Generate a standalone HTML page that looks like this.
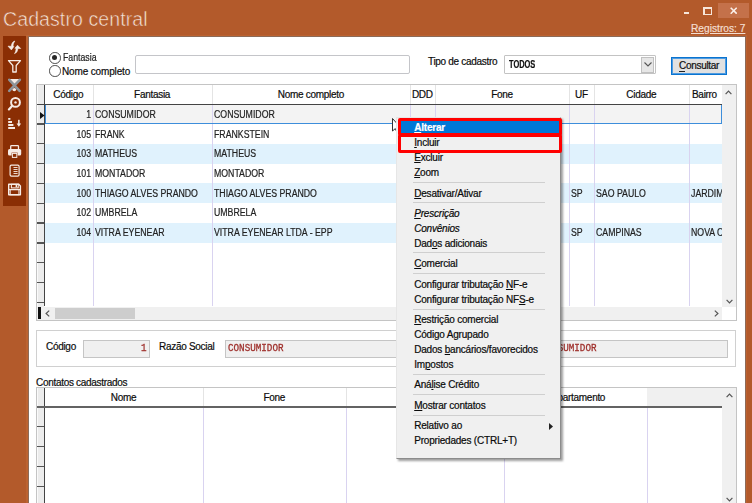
<!DOCTYPE html><html><head><meta charset="utf-8"><style>
*{margin:0;padding:0;box-sizing:border-box}
html,body{width:752px;height:503px;overflow:hidden;background:#B35A2B;font-family:"Liberation Sans",sans-serif;font-size:10px;color:#0d0d0d}
div,span{position:absolute;white-space:nowrap}
.t{line-height:12px;-webkit-text-stroke:0.2px currentColor}
.up{transform:scaleX(.875);transform-origin:0 0;color:#222}
.upr{transform:scaleX(.875);transform-origin:100% 0;color:#222}
.lc{letter-spacing:-0.3px}
.vl{width:1px;background:#D9D3F0}
.ind{left:37px;width:7px;background:#ECECEC;border-left:1px solid #FAFAFA}
.sep{left:15px;width:132px;height:1px;background:#CFCFCF}
.mi{left:17.2px;line-height:12px;-webkit-text-stroke:0.2px currentColor;letter-spacing:-0.2px;color:#0a0a0a}
.u{text-decoration:underline}
u{text-underline-offset:1px}
</style></head><body>
<div class="t" style="left:3px;top:7px;font-size:19.5px;line-height:24px;color:#F6E6DC;letter-spacing:0.1px;-webkit-text-stroke:0.5px #B35A2B">Cadastro central</div>
<div style="left:718px;top:2.5px;width:31px;height:15.5px;background:#C4714A"></div>
<div style="left:683.8px;top:12.3px;width:5.6px;height:2px;background:#F7E6DA"></div>
<div style="left:702.6px;top:7.2px;width:9.2px;height:7.4px;border:2px solid #F7E6DA;border-width:2px 1.8px 1.8px 2px"></div>
<svg style="position:absolute;left:729.5px;top:6.8px" width="7.4" height="7.4" viewBox="0 0 7.4 7.4"><path d="M0.7 0.7L6.7 6.7M6.7 0.7L0.7 6.7" stroke="#FAEFE8" stroke-width="1.6"/></svg>
<div class="t" style="left:691px;top:23px;color:#F3DED1;text-decoration:underline;font-size:10.2px">Registros: 7</div>
<div style="left:26px;top:35px;width:721px;height:468px;background:#BC6230"></div>
<div style="left:3px;top:36px;width:23px;height:170px;background:#8A2E04"></div>
<div style="left:28px;top:36px;width:718px;height:467px;background:#FFFFFF;border:1px solid #8C6A58;border-bottom:none"></div>
<div style="left:49px;top:52px;width:11.5px;height:11.5px;border-radius:50%;border:1px solid #4A4A4A;background:#fff"></div>
<div style="left:52.2px;top:55.2px;width:5.1px;height:5.1px;border-radius:50%;background:#262626"></div>
<div style="left:49px;top:65px;width:11.5px;height:11.5px;border-radius:50%;border:1px solid #4A4A4A;background:#fff"></div>
<div class="t up" style="left:62.5px;top:52px">Fantasia</div>
<div class="t" style="left:62px;top:66px;letter-spacing:-0.15px">Nome completo</div>
<div style="left:135px;top:55px;width:275px;height:19px;border:1px solid #C4C5C9;border-radius:2px;background:#fff"></div>
<div class="t lc" style="left:428px;top:56.2px">Tipo de cadastro</div>
<div style="left:504px;top:55px;width:152px;height:19px;border:1px solid #C3C3C3;border-radius:1px;background:#fff"></div>
<div class="t" style="left:508.8px;top:58.6px;font-weight:bold;font-size:10.2px;transform:scaleX(.73);transform-origin:0 0">TODOS</div>
<div style="left:641px;top:57px;width:13px;height:16px;background:#E6E6E6;border:1px solid #C0C0C0"></div>
<svg style="position:absolute;left:644px;top:62px" width="8" height="5" viewBox="0 0 8 5"><path d="M0.5 0.5L4 4L7.5 0.5" fill="none" stroke="#555" stroke-width="1.1"/></svg>
<div style="left:671px;top:57px;width:56px;height:18px;border:1px solid #0A74D0;background:#E1E1E1;box-shadow:inset 0 0 0 1px #4F9BE0"></div>
<div class="t lc" style="left:679px;top:60px">Consultar</div>
<div style="left:679px;top:71px;width:6px;height:1px;background:#222"></div>
<div style="left:36px;top:84px;width:701px;height:237px;border:1px solid #C4C4C4;background:#fff"></div>
<div style="left:45px;top:104.60px;width:677px;height:19.72px;background:#F3F3F3"></div>
<div style="left:45px;top:124.32px;width:677px;height:19.72px;background:#FFFFFF"></div>
<div style="left:45px;top:144.04px;width:677px;height:19.72px;background:#E0F2FD"></div>
<div style="left:45px;top:163.76px;width:677px;height:19.72px;background:#FFFFFF"></div>
<div style="left:45px;top:183.48px;width:677px;height:19.72px;background:#E0F2FD"></div>
<div style="left:45px;top:203.20px;width:677px;height:19.72px;background:#FFFFFF"></div>
<div style="left:45px;top:222.92px;width:677px;height:19.72px;background:#E0F2FD"></div>
<div class="ind" style="top:85px;height:222px"></div>
<div style="left:37px;top:103.50px;width:8px;height:1.3px;background:#555"></div>
<div style="left:37px;top:123.33px;width:8px;height:1.3px;background:#555"></div>
<div style="left:37px;top:143.16px;width:8px;height:1.3px;background:#555"></div>
<div style="left:37px;top:162.99px;width:8px;height:1.3px;background:#555"></div>
<div style="left:37px;top:182.82px;width:8px;height:1.3px;background:#555"></div>
<div style="left:37px;top:202.65px;width:8px;height:1.3px;background:#555"></div>
<div style="left:37px;top:222.48px;width:8px;height:1.3px;background:#555"></div>
<div style="left:37px;top:242.31px;width:8px;height:1.3px;background:#555"></div>
<div style="left:37px;top:262.14px;width:8px;height:1.3px;background:#555"></div>
<div style="left:37px;top:281.97px;width:8px;height:1.3px;background:#555"></div>
<div style="left:37px;top:301.80px;width:8px;height:1.3px;background:#555"></div>
<div style="left:44px;top:85px;width:1.3px;height:221px;background:#444"></div>
<div style="left:92.5px;top:85px;width:1px;height:19px;background:#E4E4E4"></div>
<div style="left:211.7px;top:85px;width:1px;height:19px;background:#E4E4E4"></div>
<div style="left:410px;top:85px;width:1px;height:19px;background:#E4E4E4"></div>
<div style="left:434.6px;top:85px;width:1px;height:19px;background:#E4E4E4"></div>
<div style="left:569.3px;top:85px;width:1px;height:19px;background:#E4E4E4"></div>
<div style="left:593.5px;top:85px;width:1px;height:19px;background:#E4E4E4"></div>
<div style="left:689px;top:85px;width:1px;height:19px;background:#E4E4E4"></div>
<div class="vl" style="left:92.5px;top:105px;height:201px"></div>
<div class="vl" style="left:211.7px;top:105px;height:201px"></div>
<div class="vl" style="left:410px;top:105px;height:201px"></div>
<div class="vl" style="left:434.6px;top:105px;height:201px"></div>
<div class="vl" style="left:569.3px;top:105px;height:201px"></div>
<div class="vl" style="left:593.5px;top:105px;height:201px"></div>
<div class="vl" style="left:689px;top:105px;height:201px"></div>
<div style="left:37px;top:104px;width:685px;height:1.3px;background:#444"></div>
<div class="t lc" style="left:44px;width:48.5px;top:88.8px;text-align:center">Código</div>
<div class="t lc" style="left:92.5px;width:119.19999999999999px;top:88.8px;text-align:center">Fantasia</div>
<div class="t lc" style="left:211.7px;width:198.3px;top:88.8px;text-align:center">Nome completo</div>
<div class="t lc" style="left:410px;width:24.600000000000023px;top:88.8px;text-align:center">DDD</div>
<div class="t lc" style="left:434.6px;width:134.69999999999993px;top:88.8px;text-align:center">Fone</div>
<div class="t lc" style="left:569.3px;width:24.200000000000045px;top:88.8px;text-align:center">UF</div>
<div class="t lc" style="left:593.5px;width:95.5px;top:88.8px;text-align:center">Cidade</div>
<div class="t lc" style="left:692px;top:88.8px">Bairro</div>
<div style="left:45px;top:104.5px;width:677px;height:19.5px;border:1px solid #3D8EDB;border-top:none"></div>
<svg style="position:absolute;left:40px;top:112px" width="5" height="7" viewBox="0 0 5 7"><path d="M0 0L4.5 3.5L0 7Z" fill="#111"/></svg>
<div class="t upr" style="left:44px;width:47px;text-align:right;top:109.00px">1</div>
<div class="t up" style="left:95px;top:109.00px">CONSUMIDOR</div>
<div class="t up" style="left:214px;top:109.00px">CONSUMIDOR</div>
<div class="t upr" style="left:44px;width:47px;text-align:right;top:128.65px">105</div>
<div class="t up" style="left:95px;top:128.65px">FRANK</div>
<div class="t up" style="left:214px;top:128.65px">FRANKSTEIN</div>
<div class="t upr" style="left:44px;width:47px;text-align:right;top:148.30px">103</div>
<div class="t up" style="left:95px;top:148.30px">MATHEUS</div>
<div class="t up" style="left:214px;top:148.30px">MATHEUS</div>
<div class="t upr" style="left:44px;width:47px;text-align:right;top:167.95px">101</div>
<div class="t up" style="left:95px;top:167.95px">MONTADOR</div>
<div class="t up" style="left:214px;top:167.95px">MONTADOR</div>
<div class="t upr" style="left:44px;width:47px;text-align:right;top:187.60px">100</div>
<div class="t up" style="left:95px;top:187.60px">THIAGO ALVES PRANDO</div>
<div class="t up" style="left:214px;top:187.60px">THIAGO ALVES PRANDO</div>
<div class="t up" style="left:571px;top:187.60px">SP</div>
<div class="t up" style="left:596px;top:187.60px">SAO PAULO</div>
<div style="left:690px;top:187.60px;width:32px;height:14px;overflow:hidden"><span class="t up" style="left:1px;top:0">JARDIM SAO PAULO</span></div>
<div class="t upr" style="left:44px;width:47px;text-align:right;top:207.25px">102</div>
<div class="t up" style="left:95px;top:207.25px">UMBRELA</div>
<div class="t up" style="left:214px;top:207.25px">UMBRELA</div>
<div class="t upr" style="left:44px;width:47px;text-align:right;top:226.90px">104</div>
<div class="t up" style="left:95px;top:226.90px">VITRA EYENEAR</div>
<div class="t up" style="left:214px;top:226.90px">VITRA EYENEAR LTDA - EPP</div>
<div class="t up" style="left:571px;top:226.90px">SP</div>
<div class="t up" style="left:596px;top:226.90px">CAMPINAS</div>
<div style="left:690px;top:226.90px;width:32px;height:14px;overflow:hidden"><span class="t up" style="left:1px;top:0">NOVA CAMPINAS</span></div>
<div style="left:722px;top:85px;width:14px;height:222px;background:#F0F0F0"></div>
<svg style="position:absolute;left:725px;top:90px" width="7" height="5" viewBox="0 0 7 5"><path d="M0.6 4.2L3.5 1.1L6.4 4.2" fill="none" stroke="#555" stroke-width="1.2"/></svg>
<svg style="position:absolute;left:725.5px;top:298.5px" width="7" height="5" viewBox="0 0 7 5"><path d="M0.6 0.8L3.5 3.9L6.4 0.8" fill="none" stroke="#555" stroke-width="1.2"/></svg>
<div style="left:37px;top:307px;width:685px;height:13px;background:#F0F0F0"></div>
<div style="left:38px;top:307px;width:3px;height:12px;background:#111"></div>
<div style="left:55px;top:308px;width:80px;height:11px;background:#CDCDCD"></div>
<svg style="position:absolute;left:45px;top:310px" width="5" height="7" viewBox="0 0 5 7"><path d="M4.2 0.6L1.1 3.5L4.2 6.4" fill="none" stroke="#555" stroke-width="1.2"/></svg>
<svg style="position:absolute;left:714px;top:310px" width="5" height="7" viewBox="0 0 5 7"><path d="M0.8 0.6L3.9 3.5L0.8 6.4" fill="none" stroke="#555" stroke-width="1.2"/></svg>
<div style="left:722px;top:307px;width:14px;height:13px;background:#fff"></div>
<div style="left:36px;top:330px;width:700px;height:37px;border:1px solid #D0D0D0"></div>
<div class="t lc" style="left:46px;top:341px">Código</div>
<div style="left:83px;top:340px;width:67px;height:18px;border:1px solid #C5C5C5;background:#F0F0F0"></div>
<div class="t" style="left:140.5px;top:342.3px;font-family:'Liberation Mono',monospace;font-size:10.4px;color:#9E2E2A;-webkit-text-stroke:0.3px #9E2E2A;transform:scaleX(.89);transform-origin:0 0">1</div>
<div class="t lc" style="left:159px;top:341px">Razão Social</div>
<div style="left:225px;top:340px;width:503px;height:18px;border:1px solid #C5C5C5;background:#F0F0F0"></div>
<div class="t" style="left:228.3px;top:342.3px;font-family:'Liberation Mono',monospace;font-size:10.4px;color:#9E2E2A;-webkit-text-stroke:0.3px #9E2E2A;transform:scaleX(.89);transform-origin:0 0">CONSUMIDOR</div>
<div class="t" style="left:540.6px;top:342.3px;font-family:'Liberation Mono',monospace;font-size:10.4px;color:#9E2E2A;-webkit-text-stroke:0.3px #9E2E2A;transform:scaleX(.89);transform-origin:0 0">CONSUMIDOR</div>
<div class="t lc" style="left:36px;top:377px">Contatos cadastrados</div>
<div style="left:36px;top:387px;width:701px;height:130px;border:1px solid #C4C4C4;background:#fff"></div>
<div class="ind" style="top:388px;height:120px"></div>
<div style="left:37px;top:406.30px;width:8px;height:1.3px;background:#555"></div>
<div style="left:37px;top:426.20px;width:8px;height:1.3px;background:#555"></div>
<div style="left:37px;top:446.10px;width:8px;height:1.3px;background:#555"></div>
<div style="left:37px;top:466.00px;width:8px;height:1.3px;background:#555"></div>
<div style="left:37px;top:485.90px;width:8px;height:1.3px;background:#555"></div>
<div style="left:37px;top:505.80px;width:8px;height:1.3px;background:#555"></div>
<div style="left:44px;top:388px;width:1.3px;height:120px;background:#444"></div>
<div style="left:203px;top:388px;width:1px;height:18px;background:#E4E4E4"></div>
<div class="vl" style="left:203px;top:407px;height:100px"></div>
<div style="left:345.5px;top:388px;width:1px;height:18px;background:#E4E4E4"></div>
<div class="vl" style="left:345.5px;top:407px;height:100px"></div>
<div style="left:504px;top:388px;width:1px;height:18px;background:#E4E4E4"></div>
<div class="vl" style="left:504px;top:407px;height:100px"></div>
<div style="left:646.5px;top:388px;width:1px;height:18px;background:#E4E4E4"></div>
<div class="vl" style="left:646.5px;top:407px;height:100px"></div>
<div style="left:646.5px;top:388px;width:76px;height:18px;background:#F0F0F0"></div>
<div class="t lc" style="left:44px;width:159px;top:392px;text-align:center">Nome</div>
<div class="t lc" style="left:203px;width:142.5px;top:392px;text-align:center">Fone</div>
<div class="t lc" style="left:345.5px;width:158.5px;top:392px;text-align:center">E-mail</div>
<div class="t lc" style="left:504px;width:142.5px;top:392px;text-align:center">Departamento</div>
<div style="left:37px;top:406px;width:685px;height:2px;background:#636363"></div>
<div style="left:722px;top:388px;width:14px;height:120px;background:#F0F0F0"></div>
<svg style="position:absolute;left:725.5px;top:392.5px" width="7" height="5" viewBox="0 0 7 5"><path d="M0.6 4.2L3.5 1.1L6.4 4.2" fill="none" stroke="#555" stroke-width="1.2"/></svg>
<svg style="position:absolute;left:725.5px;top:497px" width="7" height="5" viewBox="0 0 7 5"><path d="M0.6 0.8L3.5 3.9L6.4 0.8" fill="none" stroke="#555" stroke-width="1.2"/></svg>
<svg style="position:absolute;left:3px;top:36px" width="23" height="170" viewBox="0 0 23 170">
<path d="M11.9 5 C10 5.5 8.6 7 8.3 10.3 L5 10.2 L8.4 13.9 L10.9 10.5 L10 10.4 C10.1 8 10.8 6.5 11.9 5 Z" fill="#F6ECE6" stroke="#F6ECE6" stroke-width="0.6" stroke-linejoin="round"/>
<path d="M11.5 17.6 C13.4 17 14.6 15.5 14.9 12.4 L17.7 12.5 L14.5 9.2 L11.9 12.3 L13.1 12.3 C13 14.6 12.5 16.2 11.5 17.6 Z" fill="#F6ECE6" stroke="#F6ECE6" stroke-width="0.6" stroke-linejoin="round"/>
<path d="M5.5 24.6 H17.5 L13.2 29.5 V36 H9.8 V29.5 Z" fill="none" stroke="#F6ECE6" stroke-width="1.3" stroke-linejoin="round"/>
<path d="M5 43 H17.7 L11.3 49.5 Z" fill="#F6ECE6"/>
<ellipse cx="11.3" cy="53.6" rx="1.9" ry="1.6" fill="#F6ECE6"/>
<path d="M6.3 43.8 L16.6 54.8 M16.8 43.8 L6.2 54.8" stroke="#8E9499" stroke-width="2.6" stroke-linecap="round"/>
<circle cx="12.5" cy="66.4" r="4.4" fill="none" stroke="#F6ECE6" stroke-width="2"/>
<circle cx="12.5" cy="66.4" r="1.2" fill="#F6ECE6"/>
<path d="M9.3 69.7 L5.9 73.4" stroke="#F6ECE6" stroke-width="2.2" stroke-linecap="round"/>
<g fill="#F6ECE6"><rect x="5.2" y="82" width="2.2" height="1.8"/><rect x="5.2" y="85" width="3.8" height="2"/><rect x="5.2" y="88" width="5.2" height="2"/><rect x="5.2" y="91" width="6.8" height="2"/>
<rect x="15.1" y="83.8" width="1.5" height="4.2"/><path d="M13.6 87.6 H18.1 L15.85 90.8Z"/></g>
<rect x="7.7" y="109.6" width="7.8" height="4" rx="0.8" fill="none" stroke="#F6ECE6" stroke-width="1.3"/>
<rect x="5" y="113" width="13.2" height="6.5" rx="1.6" fill="#F6ECE6"/>
<rect x="8.6" y="116.6" width="6" height="5.2" fill="#8A2E04"/>
<rect x="9.4" y="117.4" width="4.4" height="4" fill="none" stroke="#F6ECE6" stroke-width="1"/>
<rect x="7.1" y="129.1" width="9" height="11" rx="1.3" fill="none" stroke="#F6ECE6" stroke-width="1.2"/>
<g stroke="#F6ECE6" stroke-width="0.9"><path d="M10.5 131.5H14.6M10.5 133.5H14.6M10.5 135.5H14.6M10.5 137.5H14.6"/></g>
<path d="M5.7 148.3 H15.8 L17.4 149.9 V158.8 H5.7 Z" fill="none" stroke="#F6ECE6" stroke-width="1.4" stroke-linejoin="round"/>
<rect x="8.4" y="148.3" width="6.8" height="3.6" fill="none" stroke="#F6ECE6" stroke-width="1.1"/>
<rect x="12.6" y="148.9" width="1.4" height="2.3" fill="#F6ECE6"/>
<path d="M5.7 153.6 H17.4" stroke="#F6ECE6" stroke-width="1.2"/>
<rect x="7.2" y="153.6" width="8.7" height="5.2" fill="none" stroke="#F6ECE6" stroke-width="1"/>
</svg>
<svg style="position:absolute;left:392px;top:117.5px" width="10" height="16" viewBox="0 0 10 16"><path d="M0.5 0.5 L0.5 13 L3.3 10.6 L5.3 15.3 L7.3 14.4 L5.4 10 L9 10 Z" fill="#fff" stroke="#333" stroke-width="1"/></svg>
<div style="left:398px;top:119px;width:165px;height:342px;background:rgba(0,0,0,0.38);filter:blur(0.8px)"></div>
<div style="left:396px;top:117px;width:165px;height:342px;background:#F0F0F0;border:1px solid #E6E6E6;border-right-color:#8C8C8C;border-bottom-color:#8C8C8C">
<div style="left:4px;top:3px;width:158px;height:13px;background:#0078D7"></div>
<div class="mi" style="top:3.60px;color:#fff;letter-spacing:-0.2px"><b><u>A</u>lterar</b></div>
<div class="mi" style="top:19.10px"><u>I</u>ncluir</div>
<div class="mi" style="top:34.30px"><u>E</u>xcluir</div>
<div class="mi" style="top:49.10px"><u>Z</u>oom</div>
<div class="mi" style="top:69.80px"><u>D</u>esativar/Ativar</div>
<div class="mi" style="top:90.10px"><i><u>P</u>rescrição</i></div>
<div class="mi" style="top:105.10px"><i>Convênios</i></div>
<div class="mi" style="top:119.90px">Dad<u>o</u>s adicionais</div>
<div class="mi" style="top:140.30px"><u>C</u>omercial</div>
<div class="mi" style="top:161.10px">Configurar tributação <u>N</u>F-e</div>
<div class="mi" style="top:175.90px">Configurar tributação NF<u>S</u>-e</div>
<div class="mi" style="top:196.10px"><u>R</u>estrição comercial</div>
<div class="mi" style="top:210.90px">Código A<u>g</u>rupado</div>
<div class="mi" style="top:225.60px">Dados <u>b</u>ancários/favorecidos</div>
<div class="mi" style="top:240.70px">Im<u>p</u>ostos</div>
<div class="mi" style="top:261.40px">Aná<u>l</u>ise Crédito</div>
<div class="mi" style="top:281.70px"><u>M</u>ostrar contatos</div>
<div class="mi" style="top:302.10px">Relativo ao</div>
<div class="mi" style="top:317.10px">Propriedades (CTRL+T)</div>
<div class="sep" style="left:16px;top:63.80px"></div>
<div class="sep" style="left:16px;top:83.90px"></div>
<div class="sep" style="left:16px;top:134.30px"></div>
<div class="sep" style="left:16px;top:154.70px"></div>
<div class="sep" style="left:16px;top:190.90px"></div>
<div class="sep" style="left:16px;top:256.00px"></div>
<div class="sep" style="left:16px;top:276.30px"></div>
<div class="sep" style="left:16px;top:296.70px"></div>
<svg style="position:absolute;left:151.5px;top:305px" width="4" height="7" viewBox="0 0 4 7"><path d="M0 0L4 3.5L0 7Z" fill="#222"/></svg>
</div>
<div style="left:397.7px;top:117.5px;width:164px;height:18.5px;border:3px solid #FF0000;border-radius:2px"></div>
<div style="left:397.7px;top:134px;width:164px;height:19px;border:3px solid #FF0000;border-radius:2px"></div>
</body></html>
